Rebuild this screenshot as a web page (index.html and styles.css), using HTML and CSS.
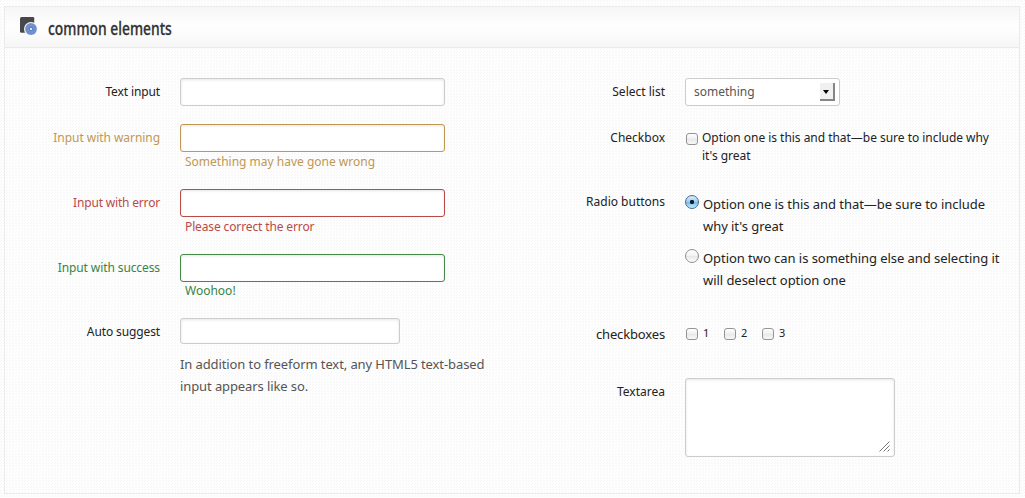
FILE: index.html
```
<!DOCTYPE html>
<html lang="en">
<head>
<meta charset="utf-8">
<title>Common elements</title>
<link rel="stylesheet" href="styles.css">
</head>
<body>
<section class="panel">
  <header class="panel-head">
    <svg class="panel-icon" width="18" height="19" viewBox="0 0 18 19">
      <path d="M1.5 0H13q1.200 0 1.200 1.200V14.500q0 1.200-1.200 1.200H1.500Q0 15.700 0 14.500V1.500Q0 0 1.500 0z" fill="#48484c"/>
      <circle cx="11" cy="12" r="7" fill="#fafafa"/>
      <circle cx="11" cy="12" r="5.900" fill="#6f91cf"/>
      <circle cx="11" cy="12" r="2" fill="#557cc0"/>
      <circle cx="11" cy="12" r="1.100" fill="#fff"/>
    </svg>
    <h2 class="panel-title">common elements</h2>
  </header>
  <form class="form">
    <div class="column">
      <div class="row row-short">
        <label class="label tight" for="text">Text input</label>
        <div><input class="input" id="text" type="text"></div>
      </div>
      <div class="row row-state warning">
        <label class="label" for="warn">Input with warning</label>
        <div><input class="input" id="warn" type="text"><span class="inline-help">Something may have gone wrong</span></div>
      </div>
      <div class="row row-state error">
        <label class="label" for="err">Input with error</label>
        <div><input class="input" id="err" type="text"><span class="inline-help">Please correct the error</span></div>
      </div>
      <div class="row row-success success">
        <label class="label" for="ok">Input with success</label>
        <div><input class="input" id="ok" type="text"><span class="inline-help">Woohoo!</span></div>
      </div>
      <div class="row">
        <label class="label tight" for="auto">Auto suggest</label>
        <div><input class="input input-auto" id="auto" type="text">
          <p class="help">In addition to freeform text, any HTML5 text-based<br>input appears like so.</p></div>
      </div>
    </div>
    <div class="column">
      <div class="row row-short">
        <span class="label">Select list</span>
        <div class="select"><span>something</span><span class="select-button"><i class="arrow"></i></span></div>
      </div>
      <div class="row row-checkbox">
        <span class="label">Checkbox</span>
        <div class="option option-small"><i class="check"></i><span>Option one is this and that—be sure to include why<br>it's great</span></div>
      </div>
      <div class="row row-radio">
        <span class="label">Radio buttons</span>
        <div class="radios">
          <div class="option"><i class="radio radio-on"></i><span>Option one is this and that—be sure to include<br>why it's great</span></div>
          <div class="option"><i class="radio"></i><span>Option two can is something else and selecting it<br>will deselect option one</span></div>
        </div>
      </div>
      <div class="row row-checks">
        <span class="label label-large">checkboxes</span>
        <div class="checks">
          <span class="check-item"><i class="check"></i>1</span>
          <span class="check-item"><i class="check"></i>2</span>
          <span class="check-item"><i class="check"></i>3</span>
        </div>
      </div>
      <div class="row">
        <label class="label" for="area">Textarea</label>
        <div class="area" id="area">
          <svg class="grip" width="11" height="11" viewBox="0 0 11 11" fill="none" stroke="#777" stroke-width="1"><path d="M.5 10.500l10-10M4.500 10.500l6-6M8.500 10.500l2-2"/></svg>
        </div>
      </div>
    </div>
  </form>
</section>
</body>
</html>
```
FILE: styles.css
```
* { box-sizing: border-box; }
body {
  margin: 0;
  padding: 6px 5px 4px 4px;
  height: 498px;
  overflow: hidden;
  background-color: #fefefe;
  background-image:
    conic-gradient(at 1px 1px, transparent 75%, #f5f5f5 0),
    conic-gradient(at 1px 1px, transparent 75%, #f5f5f5 0);
  background-position: 1px 0, 0 1px;
  background-size: 3px 3px;
  font: 12px/18px "Noto Sans", sans-serif;
  color: #222;
}
.panel {
  height: 488px;
  border: 1px solid #ebebeb;
}
.panel-head {
  display: flex;
  height: 41px;
  padding: 10px 0 0 15px;
  border-bottom: 1px solid #e9e9e9;
  background: linear-gradient(#f6f6f6, #fefefe 45%, #fdfdfd 60%, #f6f6f6);
}
.panel-icon { flex: none; }
.panel-title {
  margin: -1px 0 0 10px;
  font-size: 18px;
  line-height: 25px;
  font-weight: 500;
  color: #333;
  -webkit-text-stroke: .3px #333;
  transform: scaleX(.77);
  transform-origin: 0 0;
  white-space: nowrap;
}
.form {
  display: grid;
  grid-template-columns: 505px 1fr;
  padding-top: 30px;
}
.row {
  display: grid;
  grid-template-columns: 155px 1fr;
  column-gap: 20px;
  align-items: start;
  white-space: nowrap;
}
.row-short { height: 46px; }
.row-state { height: 65px; }
.row-success { height: 64px; }
.row-checkbox { height: 64px; }
.row-radio { height: 135px; }
.row-checks { height: 55px; }
.label {
  padding-top: 5px;
  text-align: right;
}
.tight { letter-spacing: -.12px; }
.label-large {
  padding-top: 0;
  font-size: 13px;
  line-height: 22px;
  letter-spacing: -.15px;
}
.input, .area, .select {
  border: 1px solid #ccc;
  border-radius: 3px;
  background: #fff;
}
.input, .area { box-shadow: inset 0 1px 3px rgba(0, 0, 0, .1); }
.input {
  display: block;
  width: 265px;
  height: 28px;
  margin: 0;
}
.input-auto { width: 220px; height: 26px; }
.inline-help {
  display: block;
  padding: 1px 0 0 5px;
}
.warning { color: #c09853; }
.warning .input { border-color: #c09853; }
.error { color: #b94a48; }
.error .input { border-color: #b94a48; }
.error .inline-help { letter-spacing: -.13px; }
.error .label { letter-spacing: -.18px; }
.warning .label { letter-spacing: -.05px; }
.success { color: #388443; }
.success .label { letter-spacing: -.1px; }
.success .input { border-color: #468847; }
.success .inline-help { padding-top: 0; }
.help {
  margin: 9px 0 0;
  font-size: 13px;
  line-height: 22px;
  letter-spacing: -.1px;
  color: #555;
}
.select {
  display: flex;
  justify-content: space-between;
  width: 155px;
  height: 28px;
  padding: 4px 4px 3px 8px;
  color: #555;
}
.select-button {
  display: flex;
  width: 15px;
  height: 18px;
  padding: 7px 0 0 3px;
  background: #f0f0f0;
  border-right: 2px solid #858585;
  border-bottom: 2px solid #858585;
}
.arrow {
  width: 0;
  height: 0;
  border: 3.5px solid transparent;
  border-top: 4px solid #000;
  border-bottom: 0;
}
.option {
  display: flex;
  height: 54px;
  font-size: 13px;
  line-height: 22px;
  letter-spacing: -.05px;
}
.option-small {
  padding-top: 5px;
  font-size: 12px;
  line-height: 18px;
  letter-spacing: -.03px;
}
.radios { padding-top: 5px; }
.check {
  flex: none;
  width: 12px;
  height: 12px;
  margin: 5px 5px 0 1px;
  border: 1px solid #949494;
  border-radius: 3px;
  background: linear-gradient(#fff, #eee 50%, #e7e7e7 51%, #f8f8f8);
}
.option-small .check { margin: 4px 4px 0 1px; }
.radio {
  flex: none;
  width: 14px;
  height: 14px;
  margin: 2px 4px 0 0;
  border: 1px solid #8e8e8e;
  border-radius: 50%;
  background: linear-gradient(#fff, #f2f2f2 50%, #e6e6e6 51%, #fff);
}
.radio-on {
  border-color: #48698f;
  background:
    radial-gradient(circle at 6px 6px, #111c2c 0, #111c2c 1.800px, transparent 2.500px),
    linear-gradient(#dcedfb, #9bcdf3 48%, #75b8ec 52%, #c4f0ff);
}
.checks { display: flex; }
.check-item {
  display: flex;
  width: 38px;
  font-size: 11px;
  line-height: 20px;
}
.area {
  display: flex;
  align-items: flex-end;
  justify-content: flex-end;
  width: 210px;
  height: 79px;
  padding: 0 4px 4px 0;
}
```
